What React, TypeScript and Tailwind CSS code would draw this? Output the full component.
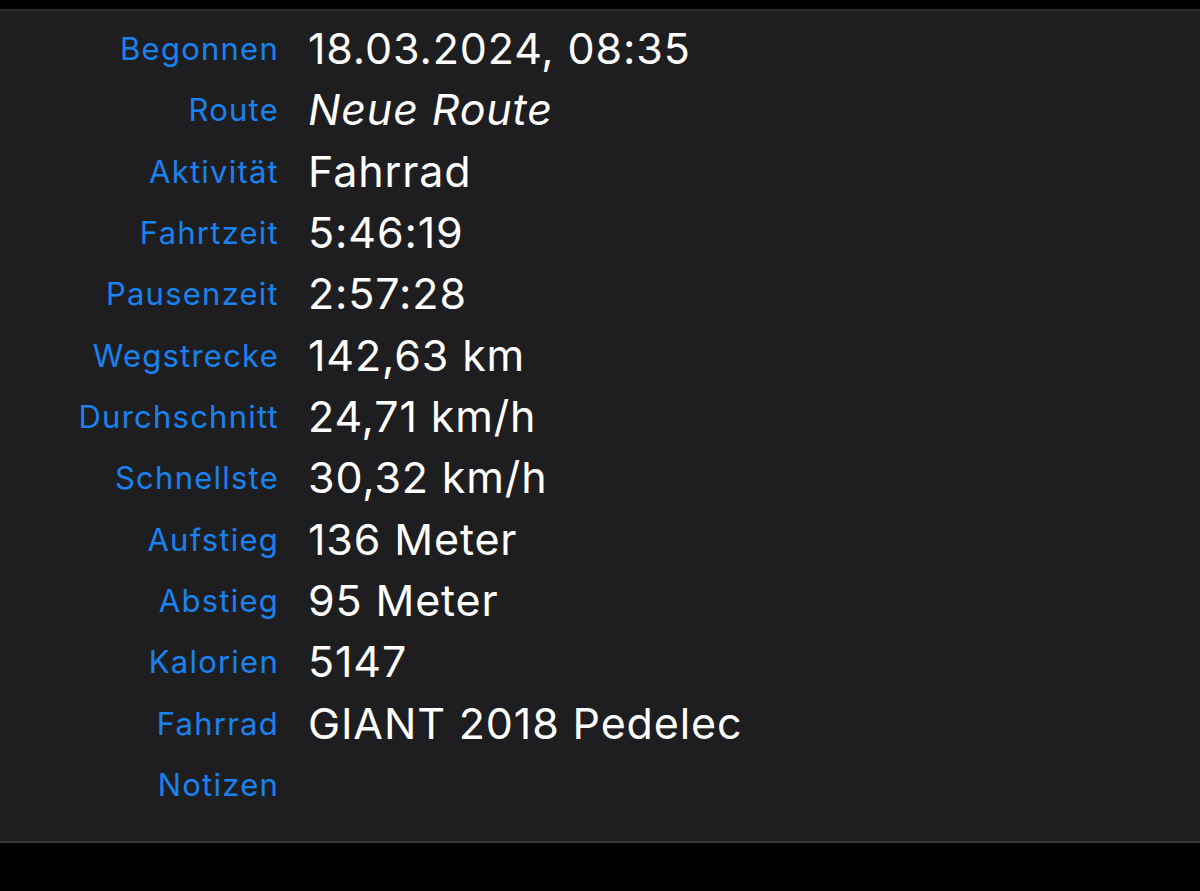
import React from "react";

const rows: { label: string; value: string; italic?: boolean }[] = [
  { label: "Begonnen", value: "18.03.2024, 08:35" },
  { label: "Route", value: "Neue Route", italic: true },
  { label: "Aktivität", value: "Fahrrad" },
  { label: "Fahrtzeit", value: "5:46:19" },
  { label: "Pausenzeit", value: "2:57:28" },
  { label: "Wegstrecke", value: "142,63 km" },
  { label: "Durchschnitt", value: "24,71 km/h" },
  { label: "Schnellste", value: "30,32 km/h" },
  { label: "Aufstieg", value: "136 Meter" },
  { label: "Abstieg", value: "95 Meter" },
  { label: "Kalorien", value: "5147" },
  { label: "Fahrrad", value: "GIANT 2018 Pedelec" },
  { label: "Notizen", value: "" },
];

export default function App() {
  return (
    <div
      className="w-[1200px] h-[891px] bg-black flex flex-col"
      style={{ fontFamily: "Inter, 'Noto Sans', sans-serif" }}
    >
      <div className="h-[9px] bg-black" />
      <div className="h-[2px] bg-[#2c2c2e]" />
      <div className="h-[830px] bg-[#1e1e20] pt-[7px] flex flex-col">
        {rows.map((r) => (
          <div key={r.label} className="h-[61.33px] flex items-center">
            <div className="w-[279px] text-right text-[31px] tracking-[0.04em] text-[#1a82ef] leading-none mr-[-3px]">
              {r.label}
            </div>
            <div
              className={`ml-[32px] text-[43px] tracking-[0.02em] text-white leading-none ${r.italic ? "italic" : ""}`}
            >
              {r.value}
            </div>
          </div>
        ))}
      </div>
      <div className="h-[2px] bg-[#3a3a3c]" />
      <div className="flex-1 bg-black" />
    </div>
  );
}
